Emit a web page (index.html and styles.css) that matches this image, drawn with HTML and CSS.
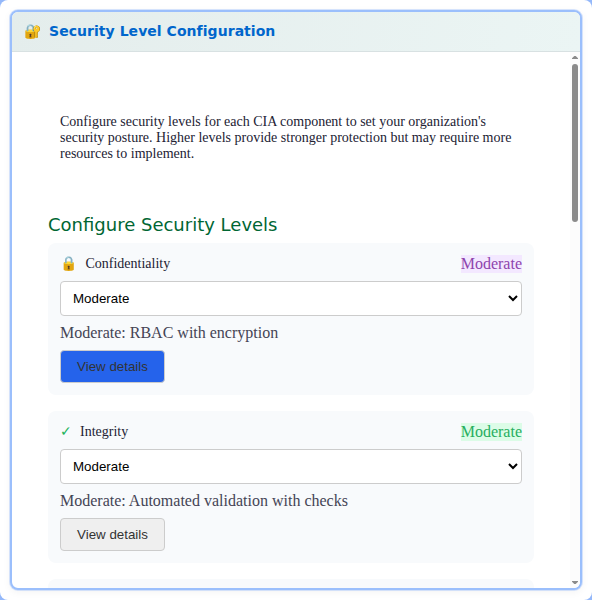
FILE: index.html
```html
<!DOCTYPE html>
<html lang="en">
<head>
<meta charset="utf-8">
<title>Security Level Configuration</title>
<link rel="stylesheet" href="styles.css">
</head>
<body>
<div class="frame">
  <section class="widget">
    <header class="widget-header"><span class="widget-icon">🔐</span><h2>Security Level Configuration</h2></header>
    <div class="viewport">
      <div class="widget-body">
        <p class="intro">Configure security levels for each CIA component to set your organization's security posture. Higher levels provide stronger protection but may require more resources to implement.</p>
        <h3>Configure Security Levels</h3>
        <div class="card">
          <div class="row"><span class="icon lock">🔒</span><span class="name">Confidentiality</span><span class="level purple">Moderate</span></div>
          <select><option>Moderate</option></select>
          <p class="desc">Moderate: RBAC with encryption</p>
          <button class="primary">View details</button>
        </div>
        <div class="card">
          <div class="row"><span class="icon check">✓</span><span class="name">Integrity</span><span class="level green">Moderate</span></div>
          <select><option>Moderate</option></select>
          <p class="desc">Moderate: Automated validation with checks</p>
          <button>View details</button>
        </div>
        <div class="card"></div>
      </div>
      <div class="scrollbar">
        <svg width="6" height="3" viewBox="0 0 6 3"><path d="M0 3V2.3L2.3 0h1.4L6 2.3V3z"/></svg>
        <div class="thumb"></div>
        <svg class="down" width="6" height="3" viewBox="0 0 6 3"><path d="M0 0v.7L2.3 3h1.4L6 .7V0z"/></svg>
      </div>
    </div>
  </section>
</div>
</body>
</html>
```
FILE: styles.css
```css
* { box-sizing: border-box; }
body { margin: 0; background: #94b8fa; font-family: "Liberation Serif", serif; color: #222233; }
.frame { height: 600px; padding: 10px; background: #fff; border-radius: 8px; }
.widget { width: 572px; height: 580px; border: 2px solid #9bbffc; border-radius: 8px; overflow: hidden; background: #fff; display: flex; flex-direction: column; box-shadow: 0 0 0 1px rgba(155,191,252,.4), 0 2px 8px rgba(0,0,0,.05); }
.widget-header { flex: none; height: 40px; padding: 0 12px 2px; display: flex; align-items: center; background: linear-gradient(100deg, #e4edec, #ebf5f4); border-bottom: 1px solid #d8e1e2; }
.widget-icon { font-size: 14px; width: 25px; padding-top: 2px; }
h2 { margin: 0; font: bold 14px "DejaVu Sans", sans-serif; letter-spacing: .045px; color: #0066cc; }
.viewport { flex: 1; min-height: 0; display: flex; }
.widget-body { flex: 1; min-width: 0; overflow: hidden; padding: 24px 36px; }
.scrollbar { flex: none; width: 10px; padding: 4px 2px; display: flex; flex-direction: column; background: #fcfcfc; }
.scrollbar svg { flex: none; display: block; fill: #8b8b8b; }
.thumb { flex: none; height: 158px; margin-top: 5px; border-radius: 3px; background: #8b8b8b; }
.scrollbar .down { margin-top: auto; }
.intro { margin: 0; padding: 38px 12px 0; height: 136px; font-size: 14px; line-height: 16px; }
h3 { margin: 0; height: 31px; font: 18px/25px "DejaVu Sans", sans-serif; color: #006633; }
.card { height: 152px; margin-bottom: 16px; padding: 12px; background: #f8fafc; border-radius: 8px; }
.row { display: flex; align-items: center; height: 18px; margin-bottom: 8px; }
.icon { font-size: 14px; margin-right: 8px; padding-bottom: 2px; }
.lock { margin-right: 8.4px; }
.check { color: #22b35b; }
.name { font-size: 14px; }
.level { margin-left: auto; font-size: 16px; line-height: 18px; }
.purple { color: #8e44ad; background: #f3e8ff; }
.green { color: #27ae60; background: #dcfce7; }
select { display: block; width: 100%; height: 35px; padding: 8px; border: 1px solid #ccc; border-radius: 4px; background: #fff; color: #000; font: 13.333px "Liberation Sans", sans-serif; }
.desc { margin: 8px 0; font-size: 16px; line-height: 18px; color: #444455; }
button { display: block; width: 105px; height: 33px; padding: 0; border: 1px solid #ccc; border-radius: 4px; background: #efefef; color: #333; font: 13.333px "Liberation Sans", sans-serif; }
.primary { background: #2563eb; }
```
